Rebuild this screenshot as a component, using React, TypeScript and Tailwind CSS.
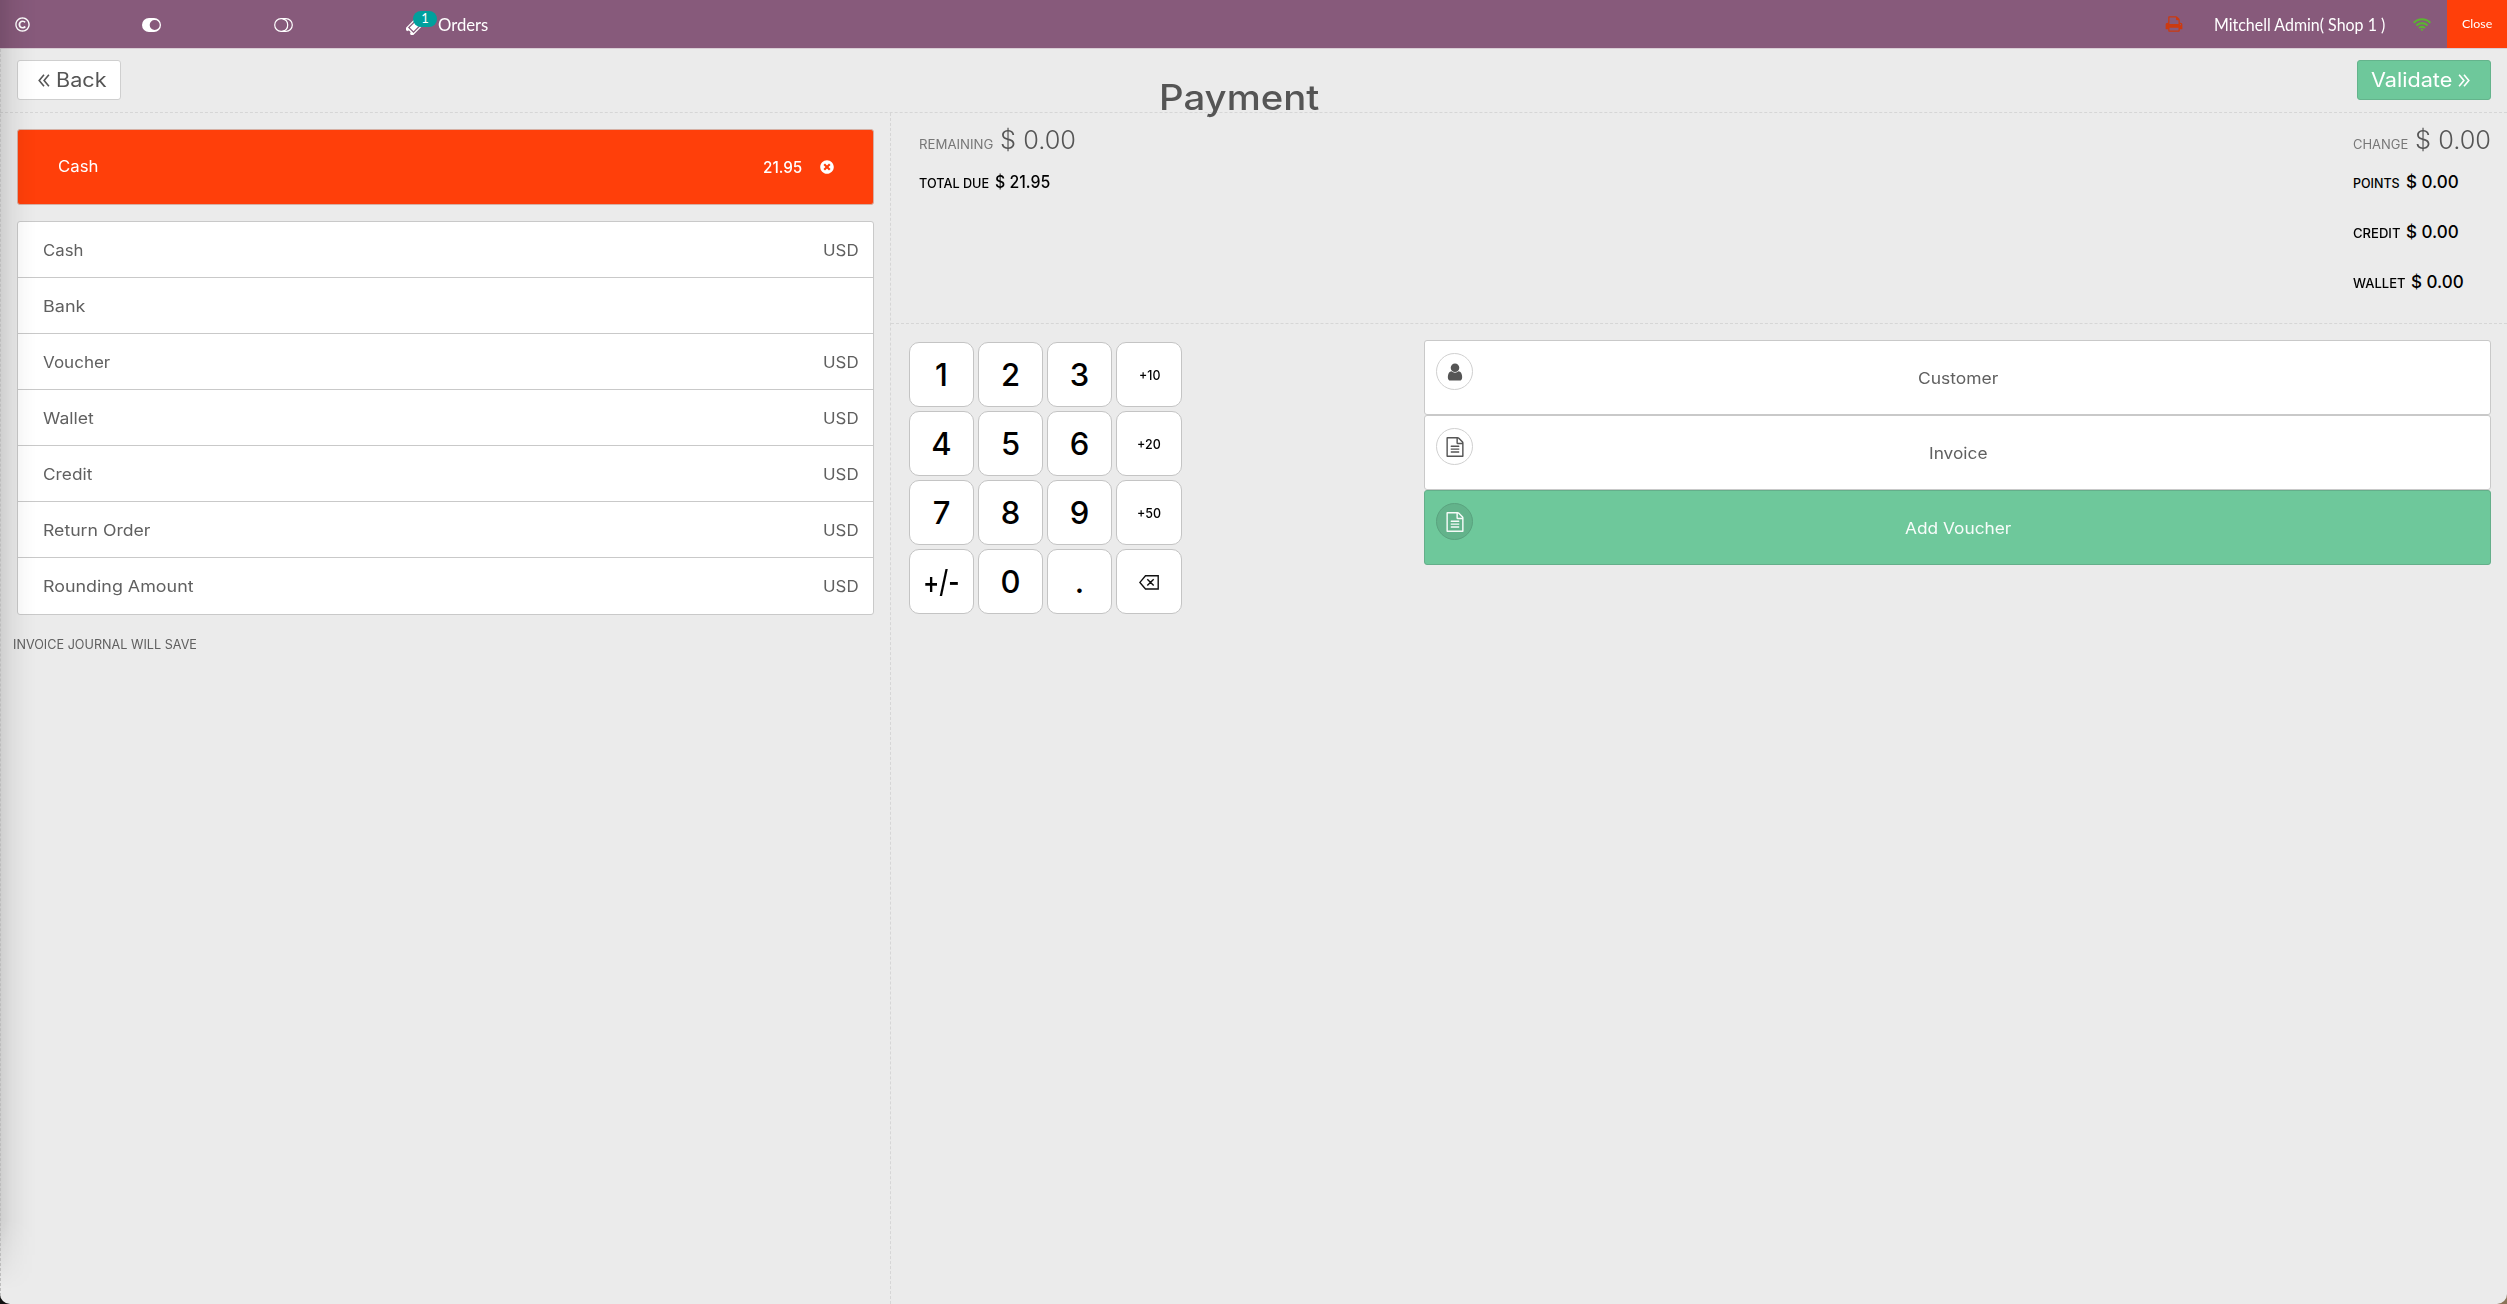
import { useLayoutEffect, useRef, useState } from "react";
import type { ReactNode } from "react";
import { FaRegCopyright, FaTimesCircle } from "react-icons/fa";

// Text whose letters are widened or narrowed so that the line takes up `w` pixels.
function Fit({ children, w, className = "" }: { children: string; w: number; className?: string }) {
  const ref = useRef<HTMLSpanElement>(null);
  const [scale, setScale] = useState(1);
  useLayoutEffect(() => {
    if (ref.current) setScale(w / ref.current.offsetWidth);
  }, [w]);
  return (
    <span className={"inline-block whitespace-pre " + className} style={{ width: w }}>
      <span ref={ref} className="inline-block origin-left" style={{ transform: `scaleX(${scale})` }}>
        {children}
      </span>
    </span>
  );
}

const FILE =
  "M1596 380q28 28 48 76t20 88v1152q0 40-28 68t-68 28h-1344q-40 0-68-28t-28-68v-1600q0-40 28-68t68-28h896q40 0 88 20t76 48zm-444-244v376h376q-10-29-22-41l-313-313q-12-12-41-22zm384 1528v-1024h-416q-40 0-68-28t-28-68v-416h-768v1536h1280zm-1024-864q0-14 9-23t23-9h704q14 0 23 9t9 23v64q0 14-9 23t-23 9h-704q-14 0-23-9t-9-23v-64zm736 224q14 0 23 9t9 23v64q0 14-9 23t-23 9h-704q-14 0-23-9t-9-23v-64q0-14 9-23t23-9h704zm0 256q14 0 23 9t9 23v64q0 14-9 23t-23 9h-704q-14 0-23-9t-9-23v-64q0-14 9-23t23-9h704z";
const USER =
  "M1536 1399q0 109-62.5 187t-150.5 78h-854q-88 0-150.5-78t-62.5-187q0-85 8.500-160.5t31.500-152 58.500-131 94-89 134.500-34.500q131 128 313 128t313-128q76 0 134.500 34.500t94 89 58.500 131 31.500 152 8.500 160.500zm-256-887q0 159-112.500 271.500t-271.500 112.500-271.500-112.500-112.500-271.500 112.500-271.500 271.500-112.500 271.500 112.500 112.500 271.500z";
const PRINT =
  "M448 1536h896v-256h-896v256zm0-640h896v-384h-160q-40 0-68-28t-28-68v-160h-640v640zm1152 64q0-26-19-45t-45-19-45 19-19 45 19 45 45 19 45-19 19-45zm128 0v416q0 13-9.500 22.500t-22.500 9.500h-224v160q0 40-28 68t-68 28h-960q-40 0-68-28t-28-68v-160h-224q-13 0-22.500-9.500t-9.500-22.500v-416q0-79 56.500-135.500t135.500-56.500h64v-544q0-40 28-68t68-28h672q40 0 88 20t76 48l152 152q28 28 48 76t20 88v256h64q79 0 135.500 56.500t56.500 135.500z";

function Glyph({ d, className }: { d: string; className: string }) {
  return (
    <svg viewBox="0 0 1792 1792" fill="currentColor" className={className}>
      <path d={d} />
    </svg>
  );
}

function Chevrons({ className }: { className: string }) {
  return (
    <svg viewBox="0 0 12 13" fill="none" stroke="currentColor" strokeWidth="1.6" className={"h-[13px] w-3 " + className}>
      <path d="M6 0.8 1.2 6.5 6 12.200M10.900 0.800 6.100 6.500 10.900 12.200" />
    </svg>
  );
}

function Toggle({ on }: { on?: boolean }) {
  return (
    <svg viewBox="0 0 19 14" className="mt-px h-[14px] w-[19px]">
      {on ? (
        <path
          fillRule="evenodd"
          fill="#fff"
          d="M7 0h5a7 7 0 0 1 0 14H7A7 7 0 0 1 7 0ZM12.700 2a5 5 0 1 0 0 10 5 5 0 1 0 0-10Z"
        />
      ) : (
        <g fill="none" stroke="#fff" strokeWidth="1.200">
          <path d="M7 .7h5a6.300 6.300 0 0 1 0 12.600H7A6.300 6.300 0 0 1 7 .7Z" />
          <path d="M8.500 .8a6.300 6.300 0 0 1 0 12.400" />
        </g>
      )}
    </svg>
  );
}

function TopBar() {
  return (
    <header className="flex h-[49px] shrink-0 items-center border-b border-[#d9cdd5] bg-[#875a7b] font-['Lato',sans-serif] text-[17px] text-white">
      <div className="w-[142px] pl-[15px]">
        <FaRegCopyright className="mt-px size-[15px]" />
      </div>
      <div className="w-[132px]">
        <Toggle on />
      </div>
      <div className="w-[132px]">
        <Toggle />
      </div>
      <div className="relative w-8">
        <svg viewBox="0 0 18 18" className="mt-1 size-[17px]">
          <g transform="rotate(-45 9 9)">
            <path fill="#fff" d="M0 3.500h18v3.500a2 2 0 0 0 0 4v3.500H0V11a2 2 0 0 0 0-4Z" />
            <path fill="none" stroke="#875a7b" strokeWidth="1.300" d="M4 5.500h10v7H4Z" />
          </g>
        </svg>
        <span className="absolute -top-[3px] left-[7px] flex h-4 w-6 items-center justify-center rounded-full bg-[#00a09d] text-[13px] leading-none">
          1
        </span>
      </div>
      <Fit w={50} className="mt-px">Orders</Fit>
      <div className="ml-auto flex h-full items-center">
        <Glyph d={PRINT} className="mr-[31px] size-[18px] text-[#cc3a10]" />
        <Fit w={171} className="mt-px">Mitchell Admin( Shop 1 )</Fit>
        <svg viewBox="0 0 18 13" className="mr-[16px] ml-[28px] h-[13px] w-[18px]" fill="none" stroke="#5bb531" strokeWidth="2.100">
          <path d="M.7 4.800a11.500 11.500 0 0 1 16.600 0M3.400 7.500a7.800 7.800 0 0 1 11.200 0M6 10.100a4.200 4.200 0 0 1 6 0" />
          <circle cx="9" cy="11.800" r="1.100" fill="#5bb531" stroke="none" />
        </svg>
        <div className="flex h-[48px] w-[60px] items-center justify-center self-start bg-[#ff3f0a] text-[12px]">
          <Fit w={30}>Close</Fit>
        </div>
      </div>
    </header>
  );
}

const METHODS: [string, number, boolean][] = [
  ["Cash", 40, true],
  ["Bank", 43, false],
  ["Voucher", 67, true],
  ["Wallet", 51, true],
  ["Credit", 49, true],
  ["Return Order", 107, true],
  ["Rounding Amount", 151, true],
];

const KEYS: [string, number][] = [
  ["1", 0], ["2", 0], ["3", 0], ["+10", 21],
  ["4", 0], ["5", 0], ["6", 0], ["+20", 24],
  ["7", 0], ["8", 0], ["9", 0], ["+50", 24],
  ["+/-", 37], ["0", 0], [".", 0], ["back", 0],
];

function Amount({ label, lw, value, vw }: { label: string; lw: number; value: string; vw: number }) {
  return (
    <div className="flex h-[50px] items-baseline font-medium text-black">
      <Fit w={lw} className="text-[12.500px] leading-5">{label}</Fit>
      <Fit w={vw} className="ml-[6px] text-[17px] leading-5">{value}</Fit>
    </div>
  );
}

function BigAmount({ label, lw, value, vw }: { label: string; lw: number; value: string; vw: number }) {
  return (
    <div className="flex h-[46px] items-baseline text-[#555]">
      <Fit w={lw} className="text-[12.500px] leading-7 text-[#777]">{label}</Fit>
      <Fit w={vw} className="ml-[7px] text-[25px] leading-7 font-light">{value}</Fit>
    </div>
  );
}

function Action({ label, w, icon, green }: { label: string; w: number; icon: ReactNode; green?: boolean }) {
  return (
    <div
      className={
        "relative flex h-[75px] items-center justify-center rounded-[3px] border pt-[2px] text-[15.500px] " +
        (green ? "border-[#64af8a] bg-[#6ec89b] text-white/95" : "border-[#c9c9c9] bg-white text-[#606060]")
      }
    >
      <span
        className={
          "absolute top-3 left-[11px] flex size-[37px] items-center justify-center rounded-full border " +
          (green ? "border-[#5aa37f] bg-[#63b38b]" : "border-[#d0d0d0] text-[#555]")
        }
      >
        {icon}
      </span>
      <Fit w={w}>{label}</Fit>
    </div>
  );
}

export default function App() {
  return (
    <div className="h-[1304px] w-[2507px] overflow-hidden bg-[linear-gradient(to_right,#111_50%,#8a7358_50%)]">
      <div className="relative flex h-full flex-col overflow-hidden rounded-b-[10px] bg-[#ebebeb] font-['Inter',sans-serif]">
        <TopBar />
        <div className="relative flex h-16 shrink-0 items-start justify-between border-b border-dashed border-[#d6d6d6] px-[17px] pt-[11px] text-[19.500px]">
          <div className="flex h-10 w-[104px] items-center rounded-[3px] border border-[#cfcfcf] bg-white pt-px pl-[20px] text-[#555]">
            <Chevrons className="mr-[6px]" />
            <Fit w={51}>Back</Fit>
          </div>
          <div className="absolute inset-x-0 top-[27px] flex justify-center pr-[29px] text-[35px] leading-[42px] font-medium text-[#555]">
            <Fit w={160}>Payment</Fit>
          </div>
          <div className="-mr-px flex h-10 w-[134px] items-center rounded-[3px] border border-[#64b48c] bg-[#6ec89b] pt-px pl-[13px] text-white">
            <Fit w={81}>Validate</Fit>
            <Chevrons className="ml-[6px] rotate-180" />
          </div>
        </div>
        <div className="flex min-h-0 flex-1">
          <section className="w-[890px] shrink-0 pr-[16px] pl-[17px]">
            <div className="mt-4 flex h-[76px] items-center rounded-[3px] border border-[#d5b0a5] bg-[#ff3f0a] pr-[39px] pl-[40px] text-[15.500px] text-white">
              <Fit w={40}>Cash</Fit>
              <Fit w={39} className="ml-auto text-[16px] font-medium">21.95</Fit>
              <FaTimesCircle className="ml-[18px] size-[14px]" />
            </div>
            <div className="mt-4 rounded-[3px] border border-[#c9c9c9] bg-white text-[15.500px] text-[#606060]">
              {METHODS.map(([name, w, usd]) => (
                <div key={name} className="flex h-14 items-center justify-between border-b border-[#c9c9c9] pt-[2px] pr-[14px] pl-[25px] last:border-b-0">
                  <Fit w={w}>{name}</Fit>
                  {usd && <Fit w={36}>USD</Fit>}
                </div>
              ))}
            </div>
            <div className="mt-5 -ml-[4px] text-[12.500px] leading-5 text-[#606060]">
              <Fit w={184}>INVOICE JOURNAL WILL SAVE</Fit>
            </div>
          </section>
          <section className="flex flex-1 flex-col border-l border-dashed border-[#d6d6d6]">
            <div className="flex h-[211px] shrink-0 justify-between border-b border-dashed border-[#d6d6d6] pt-[13px] pl-[28px]">
              <div>
                <BigAmount label="REMAINING" lw={74} value="$ 0.00" vw={76} />
                <Amount label="TOTAL DUE" lw={70} value="$ 21.95" vw={55} />
              </div>
              <div className="w-[154px]">
                <BigAmount label="CHANGE" lw={55} value="$ 0.00" vw={76} />
                <Amount label="POINTS" lw={47} value="$ 0.00" vw={53} />
                <Amount label="CREDIT" lw={47} value="$ 0.00" vw={53} />
                <Amount label="WALLET" lw={52} value="$ 0.00" vw={53} />
              </div>
            </div>
            <div className="flex justify-between pt-4 pr-4 pl-[18px]">
              <div className="mt-[2px] grid grid-cols-[65px_65px_65px_66px] gap-1">
                {KEYS.map(([k, w]) => (
                  <div
                    key={k}
                    className={
                      "flex h-[65px] items-center justify-center rounded-[10px] border border-[#c4c4c4] bg-white pt-[2px] font-medium text-black " +
                      (k.startsWith("+") && k !== "+/-" ? "text-[13px]" : "text-[31px]")
                    }
                  >
                    {k === "back" ? (
                      <svg viewBox="0 0 20 15" className="-ml-px h-[15px] w-5" fill="none" stroke="#111" strokeWidth="1.400">
                        <path d="M6.500 .8h12.700v13.200H6.500L.9 7.400ZM8.300 4.200l6.400 6.400M14.700 4.200 8.300 10.600" />
                      </svg>
                    ) : w ? (
                      <Fit w={w}>{k}</Fit>
                    ) : (
                      k
                    )}
                  </div>
                ))}
              </div>
              <div className="w-[1067px]">
                <Action label="Customer" w={80} icon={<Glyph d={USER} className="size-[20px]" />} />
                <Action label="Invoice" w={58} icon={<Glyph d={FILE} className="size-[20px]" />} />
                <Action label="Add Voucher" w={106} green icon={<Glyph d={FILE} className="size-[20px]" />} />
              </div>
            </div>
          </section>
        </div>
        <div className="pointer-events-none absolute top-0 bottom-0 left-0 w-9 bg-[linear-gradient(to_right,rgba(0,0,0,.12),rgba(0,0,0,.05)_35%,rgba(0,0,0,.015)_70%,transparent)] [mask-image:linear-gradient(to_bottom,black_1220px,transparent_1290px)]" />
        <div className="pointer-events-none absolute top-[49px] bottom-2 left-0 border-l border-dashed border-[#bdbdbd]" />
      </div>
    </div>
  );
}
